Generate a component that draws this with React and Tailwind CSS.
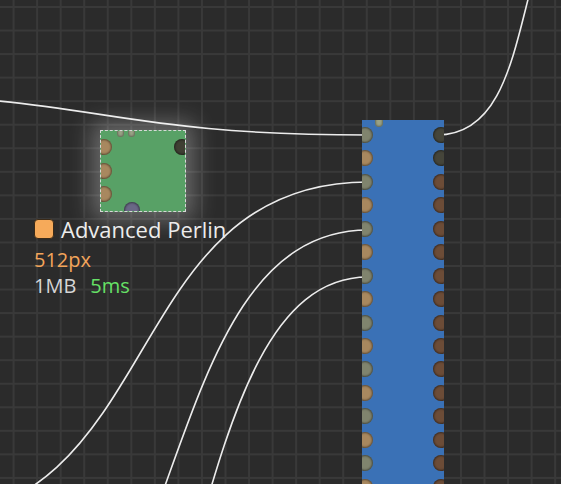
import React from "react";

const GREY = "#80846e";
const TAN = "#a8885f";
const DARK = "#45453a";
const BROWN = "#6c4c37";

function Socket({ color, className = "" }) {
  return (
    <div
      className={`shrink-0 w-[16px] h-[16px] rounded-full shadow-[inset_0_0_2px_1px_rgba(0,0,0,0.45)] ${className}`}
      style={{ backgroundColor: color }}
    />
  );
}

function Nub({ className = "" }) {
  return (
    <div
      className={`w-[7px] h-[10px] rounded-full bg-[#9aa286] shadow-[inset_0_0_2px_1px_rgba(0,0,0,0.35)] ${className}`}
    />
  );
}

export default function App() {
  const idx = Array.from({ length: 16 }, (_, k) => k);
  return (
    <div className="relative w-[561px] h-[484px] overflow-hidden bg-[#2b2b2b] bg-[linear-gradient(to_right,#393939_1.5px,transparent_1.5px),linear-gradient(to_bottom,#393939_1.5px,transparent_1.5px)] bg-[size:23.55px_23.55px] bg-[position:12.6px_6px] font-['Open_Sans',sans-serif]">
      {/* wires */}
      <svg className="absolute inset-0" width="561" height="484" viewBox="0 0 561 484" fill="none">
        <g stroke="#ececec" strokeWidth="1.6" strokeLinecap="round">
          <path d="M -165 94 C 100 94 100 135 368 135" />
          <path d="M -85 520 C 168 520 115 182 368 182" />
          <path d="M -23 710 C 194 710 146 230 368 230" />
          <path d="M 27 803 C 215 803 175 277 368 277" />
          <path d="M 437 135 C 502 135 513 55 533 -20" />
        </g>
      </svg>

      {/* green node (selected) */}
      <div className="absolute left-[100px] top-[130px] w-[86px] h-[82px] shadow-[0_0_22px_8px_rgba(255,255,255,0.3)]">
        <div className="relative flex w-full h-full overflow-hidden bg-[#58a166] border border-dashed border-[#d8d8d8]">
          <div className="flex flex-col gap-[7.5px] pt-[8px] ml-[-5px]">
            <Socket color={TAN} />
            <Socket color={TAN} />
            <Socket color={TAN} />
          </div>
          <div className="flex flex-1 flex-col justify-between">
            <div className="flex gap-[4px] mt-[-4px] pl-[5px]">
              <Nub />
              <Nub />
            </div>
            <div className="flex pl-[12px] mb-[-7px]">
              <Socket color="#6a6886" />
            </div>
          </div>
          <div className="pt-[8px] mr-[-5px]">
            <Socket color="#3f3f33" />
          </div>
        </div>
      </div>

      {/* label */}
      <div className="absolute left-[34px] top-[216px] flex flex-col">
        <div className="flex items-center gap-[7px] h-[26px]">
          <div className="w-[20px] h-[20px] rounded-[4px] bg-[#f6aa5a] border border-[#3a2a18]" />
          <span className="text-[#ececec] text-[22px] leading-[26px]">Advanced Perlin</span>
        </div>
        <div className="text-[#f3a45a] text-[20px] leading-[28px] mt-[4px]">512px</div>
        <div className="flex gap-[14px] text-[20px] leading-[24px]">
          <span className="text-[#d6d6d6]">1MB</span>
          <span className="text-[#66e066]">5ms</span>
        </div>
      </div>

      {/* blue node */}
      <div className="absolute left-[362px] top-[120px] w-[82px] h-[380px] overflow-hidden bg-[#3a71b6] flex justify-between">
        <div className="flex flex-col gap-[7.45px] pt-[7px] ml-[-5px]">
          {idx.map((k) => (
            <Socket key={"l" + k} color={k % 2 === 0 ? GREY : TAN} />
          ))}
        </div>
        <div className="flex-1 flex pl-[2px] mt-[-4px]">
          <div className="w-[8px] h-[11px] rounded-full bg-[#9aa286] shadow-[inset_0_0_2px_1px_rgba(0,0,0,0.35)]" />
        </div>
        <div className="flex flex-col gap-[7.45px] pt-[7px] mr-[-5px]">
          {idx.map((k) => (
            <Socket key={"r" + k} color={k < 2 ? DARK : BROWN} />
          ))}
        </div>
      </div>
    </div>
  );
}
